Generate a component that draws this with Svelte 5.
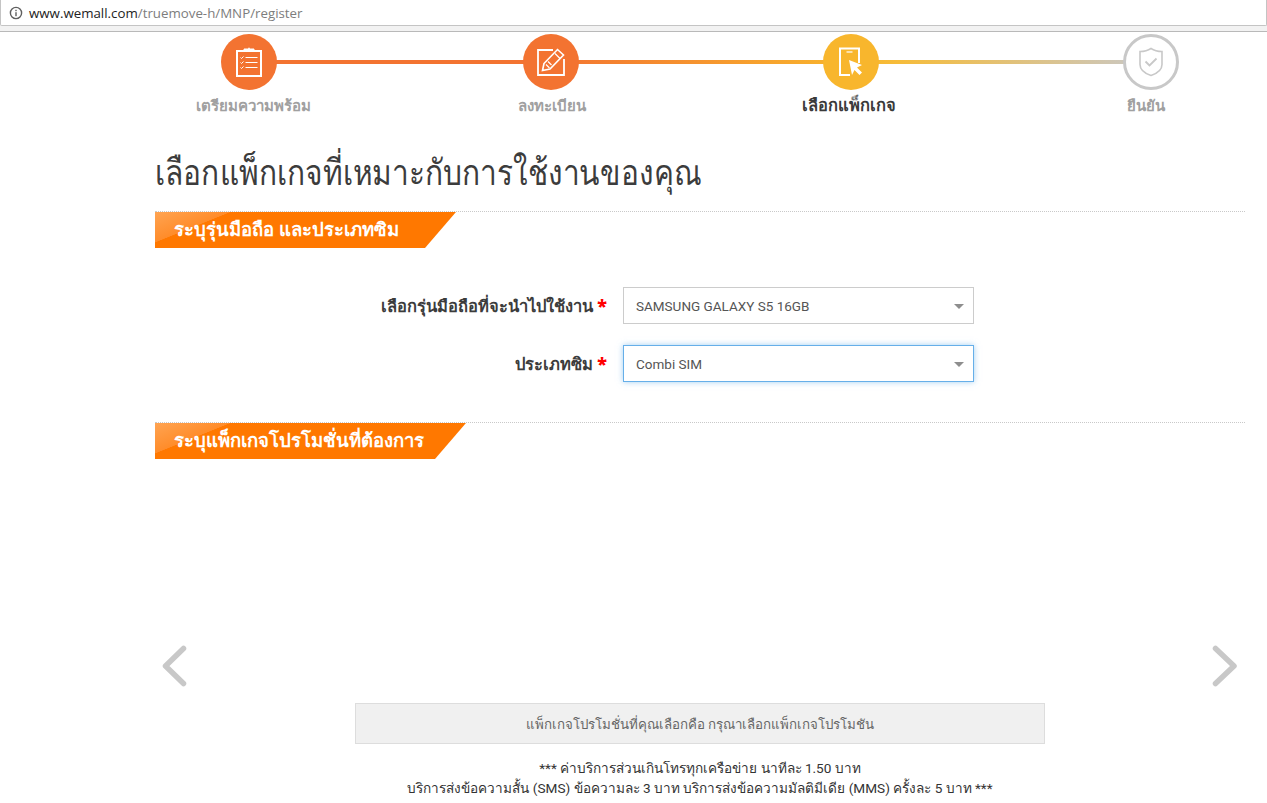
<script>
	const steps = [
		{ label: 'เตรียมความพร้อม', icon: 'list', color: 'orange', gap: 0, nudge: 8 },
		{ label: 'ลงทะเบียน', icon: 'edit', color: 'orange', gap: 182, nudge: 1 },
		{ label: 'เลือกแพ็กเกจ', icon: 'phone', color: 'yellow', gap: 180, nudge: -4, active: true },
		{ label: 'ยืนยัน', icon: 'shield', color: 'grey', gap: 180, nudge: -10 }
	];
</script>

<div class="browser">
	<div class="urlbar">
		<svg class="info" viewBox="0 0 14 14" width="14" height="14">
			<circle cx="7" cy="7" r="5.6" fill="none" stroke="#5f5f5f" stroke-width="1.4" />
			<rect x="6.3" y="6.2" width="1.4" height="4" fill="#5f5f5f" />
			<rect x="6.3" y="3.8" width="1.4" height="1.4" fill="#5f5f5f" />
		</svg>
		<span class="host">www.wemall.com</span><span class="path">/truemove-h/MNP/register</span>
	</div>
</div>

<div class="steps">
	<div class="track"></div>
	{#each steps as step}
		<div class="step" style:margin-left="{step.gap}px">
			<div class="circle {step.color}">
				{#if step.icon === 'list'}
					<svg viewBox="0 0 28 32" width="28" height="32" fill="none" stroke="#fff">
						<path d="M2 5h24v25H2z" stroke-width="2" />
						<path d="M9 5V3h3.5a1.8 1.8 0 0 1 3 0H19v2z" fill="#fff" stroke-width="1" />
						<path d="M5.5 11.5l1 1 2-2M5.5 16.5l1 1 2-2M5.5 21.5l1 1 2-2" stroke-width="1" />
						<path d="M10.5 11.5h12M10.5 16.5h12M10.5 21.5h12" stroke-width="1.2" />
					</svg>
				{:else if step.icon === 'edit'}
					<svg viewBox="0 0 30 30" width="30" height="30" fill="none" stroke="#fff">
						<path d="M17 3H2v25h26V12" stroke-width="1.8" />
						<path d="M8 16.5L21.5 2.5l6 5.5L14 22l-7.5 1.5z" stroke-width="1.6" />
						<path d="M10 17.5l3.5 3.5M12 14.5l3.5 3.5M19 6.5l5 5" stroke-width="1.2" />
					</svg>
				{:else if step.icon === 'phone'}
					<svg viewBox="0 0 26 30" width="26" height="30">
						<path d="M12 28H2V1.5h19V16" fill="none" stroke="#fff" stroke-width="2" />
						<path d="M8.5 5h6" stroke="#fff" stroke-width="1.2" />
						<path d="M11 13l13 5-5 2.5 5 5-2.5 2.5-5-5-2.5 5z" fill="#fff" />
					</svg>
				{:else}
					<svg viewBox="0 0 26 30" width="26" height="30" fill="none" stroke="#c8c8c8" stroke-width="1.6">
						<path d="M2 4.5C6 4.5 10 3.5 13 1.5c3 2 7 3 11 3v13c0 5-5 9-11 11C7 26.5 2 22.5 2 17.5z" />
						<path d="M7.5 14.5l4 4 7-7" stroke-width="1.8" />
					</svg>
				{/if}
			</div>
			<div class="step-label" class:active={step.active} style:margin-left="{step.nudge}px">{step.label}</div>
		</div>
	{/each}
</div>

<main class="content">
	<h1>เลือกแพ็กเกจที่เหมาะกับการใช้งานของคุณ</h1>

	<section class="section first">
		<h2 class="tag">ระบุรุ่นมือถือ และประเภทซิม</h2>
		<div class="form">
			<div class="row">
				<span class="field-label">เลือกรุ่นมือถือที่จะนำไปใช้งาน <b>*</b></span>
				<div class="select">SAMSUNG GALAXY S5 16GB</div>
			</div>
			<div class="row">
				<span class="field-label">ประเภทซิม <b>*</b></span>
				<div class="select focus">Combi SIM</div>
			</div>
		</div>
	</section>

	<section class="section">
		<h2 class="tag wide">ระบุแพ็กเกจโปรโมชั่นที่ต้องการ</h2>
		<div class="carousel">
			<svg viewBox="0 0 26 42" width="26" height="42" fill="none" stroke="#c8c8c8" stroke-width="5.5" stroke-linecap="round" stroke-linejoin="round">
				<path d="M22.5 3.5L4.500 21l18 17.500" />
			</svg>
			<svg viewBox="0 0 26 42" width="26" height="42" fill="none" stroke="#c8c8c8" stroke-width="5.5" stroke-linecap="round" stroke-linejoin="round">
				<path d="M3.5 3.5L22 21 3.500 38.500" />
			</svg>
		</div>
	</section>

	<div class="summary">แพ็กเกจโปรโมชั่นที่คุณเลือกคือ กรุณาเลือกแพ็กเกจโปรโมชัน</div>
	<p class="note">
		*** ค่าบริการส่วนเกินโทรทุกเครือข่าย นาทีละ 1.50 บาท<br />
		บริการส่งข้อความสั้น (SMS) ข้อความละ 3 บาท บริการส่งข้อความมัลติมีเดีย (MMS) ครั้งละ 5 บาท ***
	</p>
</main>

<style>
	:global(body) {
		background: #fff;
		overflow: hidden;
		font-family: 'Noto Sans', 'Liberation Sans', sans-serif;
		color: #333;
	}

	.browser {
		height: 31px;
		background: #f2f2f2;
		border-bottom: 1px solid #b9b9b9;
	}

	.urlbar {
		height: 26px;
		box-sizing: border-box;
		display: flex;
		align-items: center;
		padding-left: 8px;
		background: #fff;
		border: 1px solid #c4c4c4;
		border-top: 0;
		border-radius: 0 0 2px 2px;
		font-family: 'Open Sans', sans-serif;
		font-size: 13.3px;
		white-space: nowrap;
	}

	.info {
		margin-right: 6px;
	}

	.host {
		color: #222;
	}

	.path {
		color: #7d7d7d;
	}

	.steps {
		position: relative;
		display: flex;
		margin: 2px 0 0 189px;
		width: 1022px;
	}

	.track {
		position: absolute;
		left: 60px;
		right: 60px;
		top: 26px;
		height: 4px;
		background: linear-gradient(90deg, #f37331 0%, #f37331 33%, #f8b62d 67%, #f6bc3a 72%, #c8c8c8 100%);
	}

	.step {
		position: relative;
		width: 120px;
		display: flex;
		flex-direction: column;
		align-items: center;
	}

	.circle {
		width: 56px;
		height: 56px;
		box-sizing: border-box;
		border-radius: 50%;
		display: flex;
		align-items: center;
		justify-content: center;
	}

	.orange {
		background: #f37331;
	}

	.yellow {
		background: #f8b62d;
	}

	.grey {
		background: #fff;
		border: 3px solid #c8c8c8;
	}

	.step-label {
		margin-top: 4px;
		font-size: 15px;
		line-height: 22px;
		font-weight: 600;
		color: #a0a0a0;
		white-space: nowrap;
	}

	.step-label.active {
		font-size: 16.5px;
		font-weight: 700;
		color: #3a3a3a;
	}

	.content {
		margin: 0 22px 0 155px;
	}

	h1 {
		margin: 31px 0 0;
		font-size: 36px;
		line-height: 50px;
		font-weight: 400;
		color: #3c3c3c;
		white-space: nowrap;
		transform: scaleX(0.83);
		transform-origin: left;
	}

	.section {
		border-top: 1px dotted #c9c9c9;
	}

	.section.first {
		margin-top: 14px;
	}

	.tag {
		margin: 0;
		width: 301px;
		height: 36px;
		box-sizing: border-box;
		padding-left: 19px;
		font-size: 18.5px;
		line-height: 33px;
		font-weight: 700;
		color: #fff;
		background: linear-gradient(158deg, #ffa452 0, #ff8c2a 28px, #ff7800 28.5px);
		clip-path: polygon(0 0, 100% 0, 270px 100%, 0 100%);
	}

	.tag.wide {
		width: 311px;
		clip-path: polygon(0 0, 100% 0, 280px 100%, 0 100%);
	}

	.form {
		padding: 39px 0 40px;
		display: flex;
		flex-direction: column;
		gap: 21px;
	}

	.row {
		display: flex;
		align-items: center;
		gap: 16px;
		margin-left: 100px;
	}

	.field-label {
		width: 352px;
		text-align: right;
		font-size: 16.5px;
		line-height: 24px;
		font-weight: 600;
		color: #3c3c3c;
		white-space: nowrap;
	}

	.field-label b {
		color: #f00;
		font-size: 18px;
	}

	.select {
		position: relative;
		width: 351px;
		height: 37px;
		box-sizing: border-box;
		padding-left: 12px;
		border: 1px solid #ccc;
		font-family: 'Roboto', sans-serif;
		font-size: 13.5px;
		line-height: 37px;
		color: #555;
	}

	.select::after {
		content: '';
		position: absolute;
		right: 9px;
		top: 16px;
		border-style: solid;
		border-width: 5px 5px 0;
		border-color: #8e8e8e transparent transparent;
	}

	.select.focus {
		border-color: #66afe9;
		box-shadow: 0 0 6px rgba(102, 175, 233, 0.6);
	}

	.carousel {
		display: flex;
		justify-content: space-between;
		padding: 186px 7px 0 6px;
	}

	.summary {
		width: 690px;
		height: 41px;
		box-sizing: border-box;
		margin: 16px 0 0 200px;
		background: #f0f0f0;
		border: 1px solid #ddd;
		text-align: center;
		font-size: 13.3px;
		line-height: 41px;
		color: #666;
	}

	.note {
		width: 690px;
		margin: 14px 0 0 200px;
		text-align: center;
		font-family: 'Roboto', sans-serif;
		font-size: 13.6px;
		line-height: 20px;
		color: #333;
		white-space: nowrap;
	}
</style>
